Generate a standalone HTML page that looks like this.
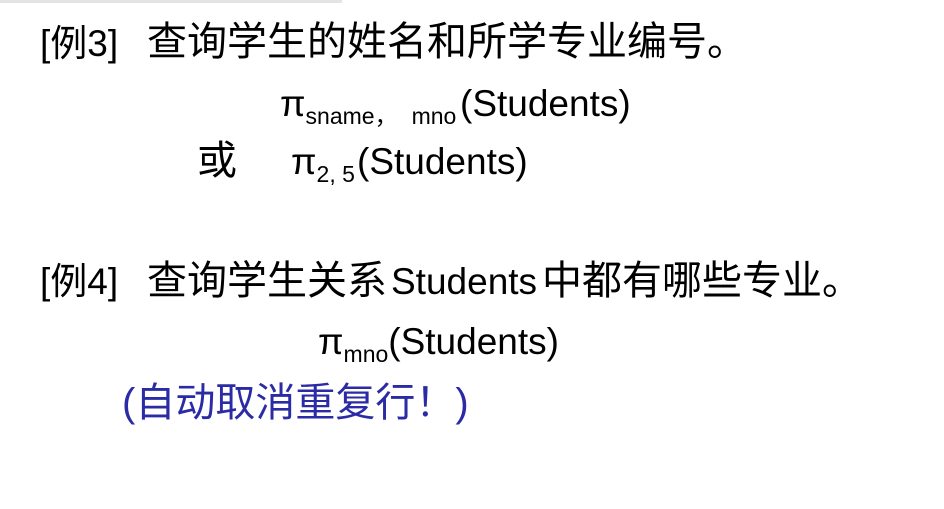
<!DOCTYPE html>
<html><head><meta charset="utf-8"><style>
body{margin:0;width:944px;height:509px;background:#fff;position:relative;overflow:hidden;font-family:"Liberation Sans","Noto Sans CJK SC",sans-serif;color:#000}
.t{position:absolute;white-space:nowrap;font-size:37px;line-height:1}
.c{position:absolute;white-space:nowrap;font-size:40px;line-height:1}
sub{font-size:23px;vertical-align:-8px}
.bar{position:absolute;left:0;top:0;width:342px;height:3px;background:#e4e4e4}
</style></head><body>
<div class="bar"></div>
<div class="t" style="left:40px;top:25px">[例3]</div>
<div class="c" style="left:147px;top:22px">查询学生的姓名和所学专业编号。</div>
<div class="t" style="left:280px;top:85px">π<sub>sname<span style="letter-spacing:14px">，</span>mno</sub></div>
<div class="t" style="left:460px;top:85px">(Students)</div>
<div class="c" style="left:197px;top:141px">或</div>
<div class="t" style="left:291px;top:143px">π<sub>2, 5</sub></div>
<div class="t" style="left:357px;top:143px">(Students)</div>
<div class="t" style="left:40px;top:263px">[例4]</div>
<div class="c" style="left:147px;top:261px">查询学生关系</div>
<div class="t" style="left:391px;top:263px">Students</div>
<div class="c" style="left:542px;top:261px">中都有哪些专业。</div>
<div class="t" style="left:318px;top:323px">π<sub>mno</sub>(Students)</div>
<div class="c" style="left:122px;top:383px;color:#2b2ba6">(自动取消重复行！)</div>
</body></html>
